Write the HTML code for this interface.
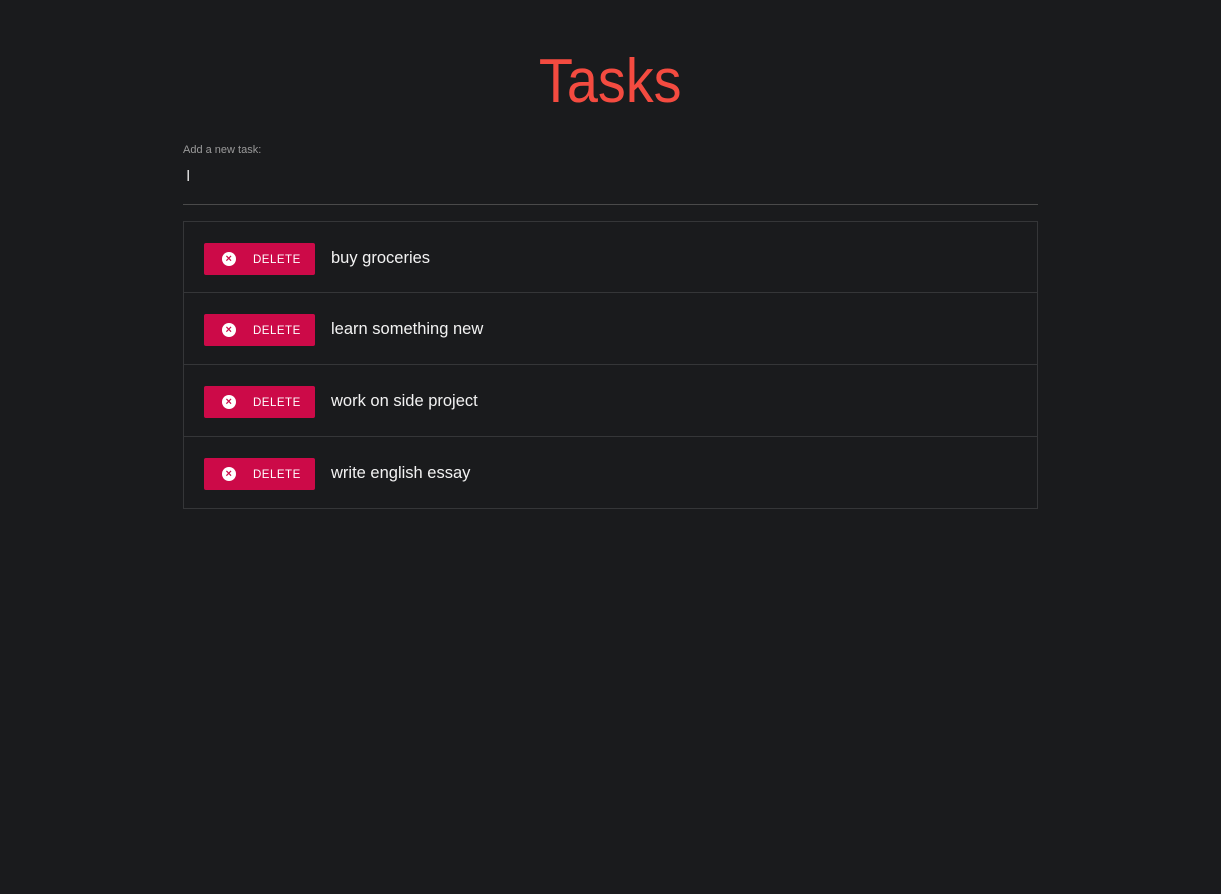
<!DOCTYPE html>
<html><head><meta charset="utf-8"><style>
body{margin:0;background:#1a1b1d;width:1221px;height:894px;font-family:"Liberation Sans",sans-serif;overflow:hidden}
h1{position:absolute;left:0;width:1221px;top:46px;margin:0;text-align:center;color:#f44b40;font-weight:normal;font-size:62px;line-height:72px}
h1 span{display:inline-block;transform:scaleX(0.9)}
.lbl{position:absolute;left:183px;top:144px;font-size:11px;color:#9a9a9a}
.cur{position:absolute;left:186px;top:168px;color:#ddd;font-size:16px}
.line{position:absolute;left:183px;top:204px;width:855px;height:1px;background:#4a4a4a}
.list{position:absolute;left:183px;top:221px;width:853px;border:1px solid #353638}
.row{height:71px;border-top:1px solid #353638;position:relative}
.row:first-child{border-top:none;height:70px}
.btn{position:absolute;left:20px;top:21px;width:111px;height:32px;background:#cc0a48;border-radius:2px;color:#fff;font-size:11.5px;letter-spacing:.5px}
.btn .ic{position:absolute;left:18px;top:9px;width:14px;height:14px;border-radius:50%;background:#fff;color:#cc0a48;font-size:11px;line-height:14px;text-align:center;font-weight:bold}
.btn .t{position:absolute;left:49px;top:11px;line-height:13px}
.txt{position:absolute;left:147px;top:27px;color:#f2f2f2;font-size:16.5px}
</style></head><body>
<h1><span>Tasks</span></h1>
<div class="lbl">Add a new task:</div>
<div class="cur">I</div>
<div class="line"></div>
<div class="list">
<div class="row"><div class="btn"><div class="ic">×</div><div class="t">DELETE</div></div><div class="txt">buy groceries</div></div>
<div class="row"><div class="btn"><div class="ic">×</div><div class="t">DELETE</div></div><div class="txt">learn something new</div></div>
<div class="row"><div class="btn"><div class="ic">×</div><div class="t">DELETE</div></div><div class="txt">work on side project</div></div>
<div class="row"><div class="btn"><div class="ic">×</div><div class="t">DELETE</div></div><div class="txt">write english essay</div></div>
</div>
</body></html>
